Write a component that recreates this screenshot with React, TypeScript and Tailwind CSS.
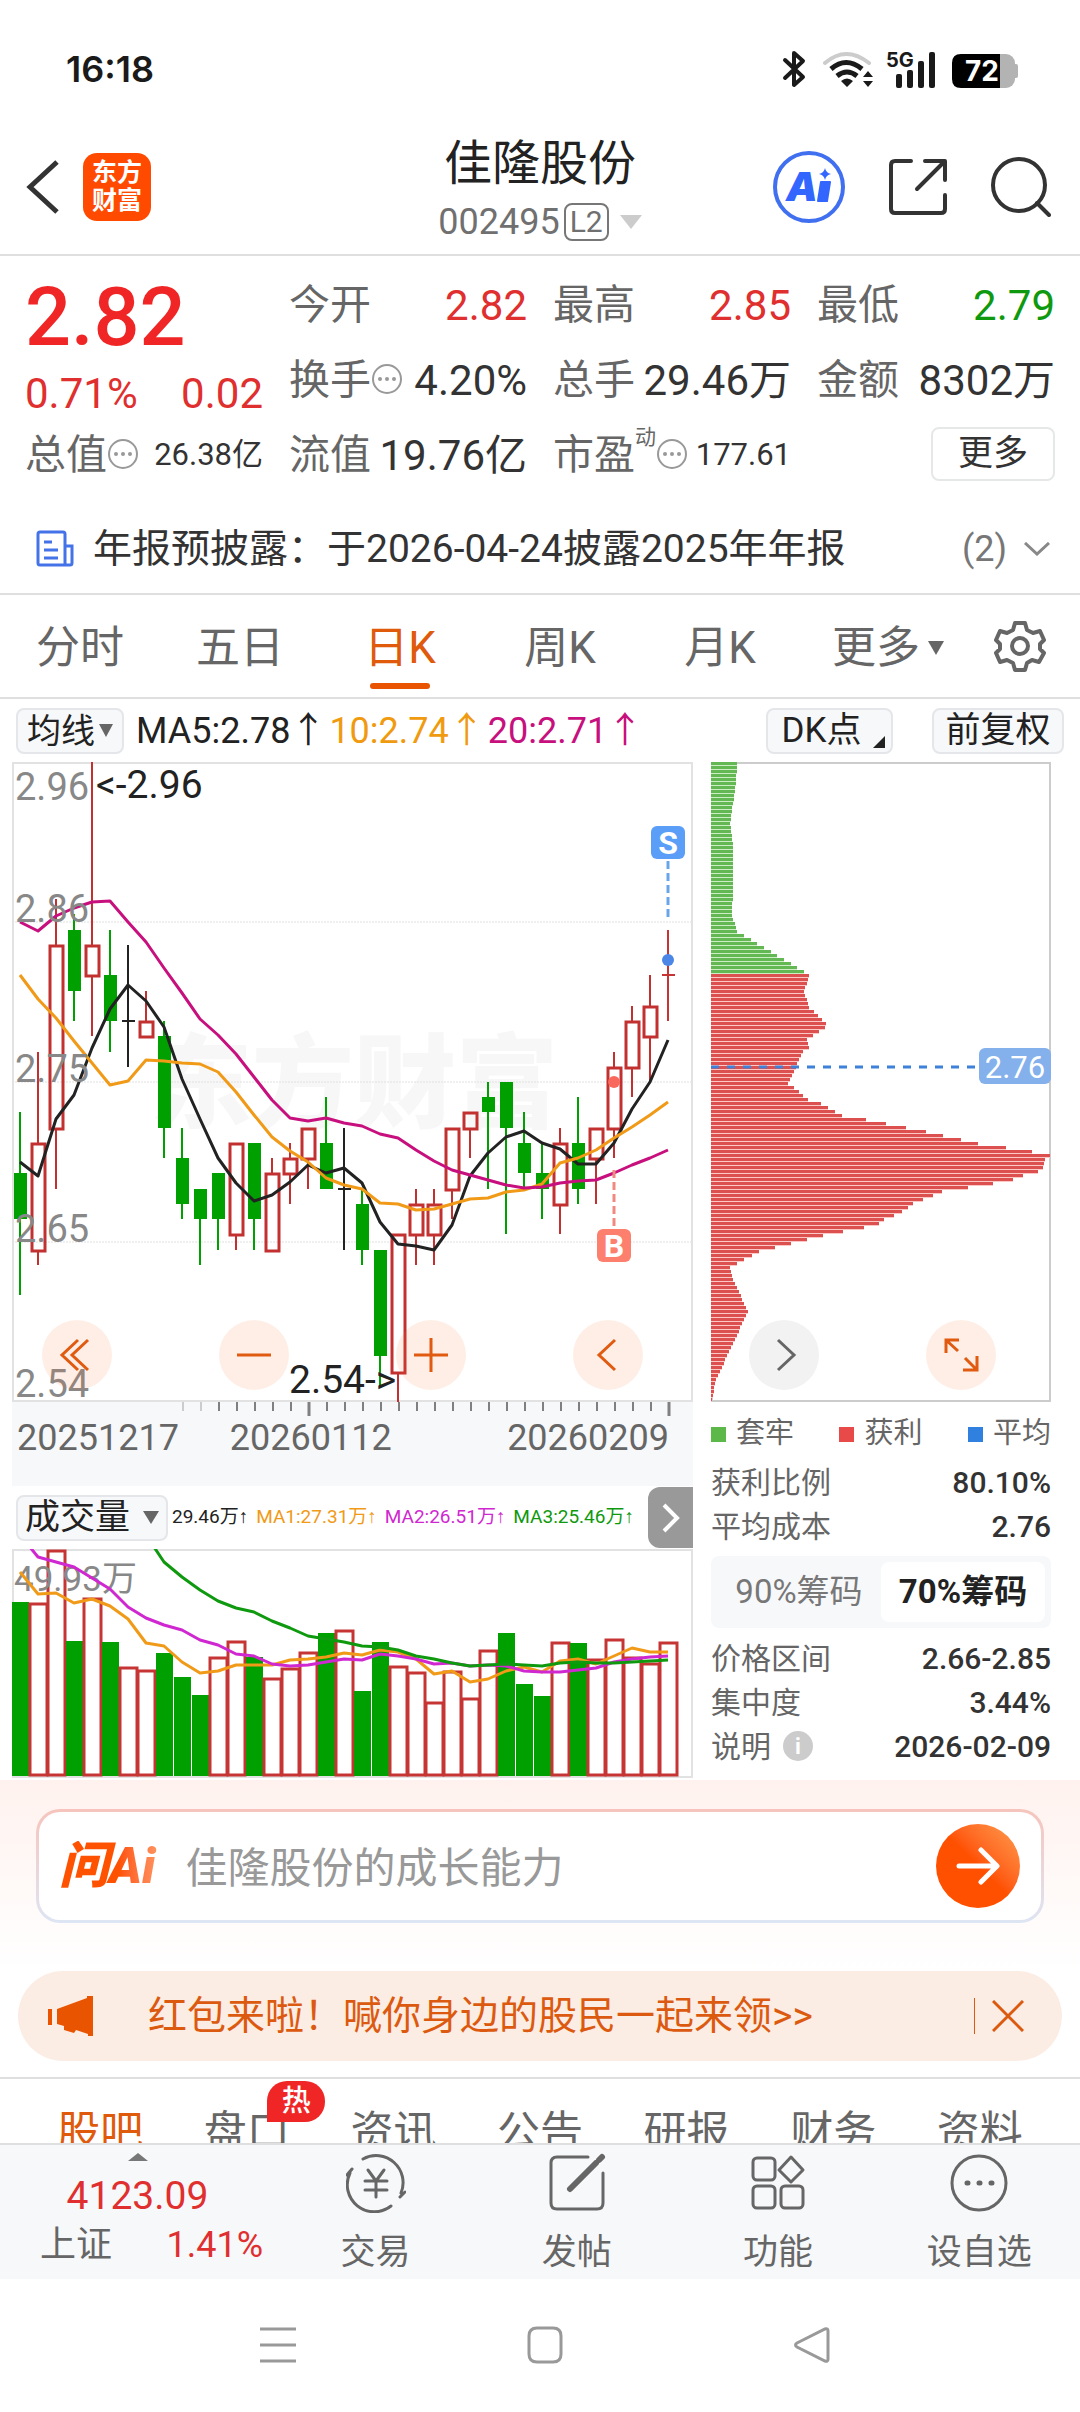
import React, { useState } from 'react';

type Candle = [open: number, close: number, high: number, low: number];

// prices in cents
const CANDLES: Candle[] = [
  [269, 266, 273, 261], [264, 271, 277, 263], [272, 284, 287, 268], [285, 281, 286, 279],
  [282, 284, 296, 278], [282, 279, 285, 277], [279, 279, 284, 276], [278, 279, 281, 278],
  [278, 272, 279, 270], [270, 267, 272, 266], [268, 266, 268, 263], [269, 266, 269, 264],
  [265, 271, 271, 264], [271, 266, 271, 264], [264, 269, 270, 264], [269, 270, 271, 267],
  [270, 272, 272, 268], [271, 268, 274, 268], [268, 268, 272, 264], [267, 264, 268, 263],
  [264, 257, 264, 255], [256, 265, 265, 254], [265, 267, 268, 263], [265, 267, 268, 263],
  [268, 272, 272, 266], [272, 273, 273, 270], [274, 273, 275, 268], [275, 272, 275, 265],
  [271, 269, 273, 268], [269, 268, 271, 266], [267, 271, 272, 265], [271, 268, 274, 267],
  [270, 272, 272, 267], [272, 276, 277, 270], [276, 279, 280, 274], [278, 280, 282, 275],
  [282, 282, 285, 279],
];

const MA5 = [400, 414, 357, 333, 286, 247, 223, 239, 265, 317, 357, 396, 421, 439, 433, 420, 403, 411, 406, 421, 460, 482, 484, 488, 463, 414, 391, 375, 369, 381, 387, 402, 402, 381, 347, 320, 278];
const MA10 = [213, 237, 256, 279, 301, 323, 319, 298, 299, 301, 302, 310, 330, 353, 375, 389, 400, 416, 423, 427, 441, 442, 448, 447, 442, 437, 436, 430, 428, 422, 401, 396, 388, 376, 365, 353, 340];
const MA20 = [160, 169, 154, 146, 140, 139, 160, 180, 206, 231, 257, 273, 292, 315, 338, 356, 359, 356, 361, 364, 372, 376, 388, 399, 408, 413, 418, 423, 426, 425, 421, 419, 418, 411, 403, 396, 388];

// top edge of each volume bar, g = falling day, r = rising day
const VOLUME: [string, number][] = [
  ['g', 53], ['r', 54], ['r', 1], ['g', 92], ['r', 49], ['g', 93], ['r', 118], ['r', 121], ['g', 104], ['g', 128],
  ['g', 146], ['r', 108], ['r', 92], ['g', 108], ['r', 129], ['r', 119], ['r', 103], ['g', 84], ['r', 81], ['g', 142],
  ['g', 93], ['r', 117], ['r', 123], ['r', 153], ['r', 122], ['r', 149], ['r', 101], ['g', 84], ['g', 135], ['g', 147],
  ['r', 93], ['g', 94], ['r', 110], ['r', 90], ['r', 108], ['r', 114], ['r', 93],
];
const VMA1 = [23, 45, 44, 54, 50, 57, 70, 94, 97, 113, 124, 122, 116, 116, 116, 111, 110, 108, 104, 106, 101, 103, 110, 125, 122, 133, 130, 122, 118, 123, 112, 110, 115, 107, 99, 103, 103];
const VMA2 = [-14, 8, 13, 18, 29, 40, 58, 69, 76, 81, 91, 96, 105, 107, 115, 117, 116, 113, 110, 111, 105, 107, 110, 115, 114, 117, 116, 117, 122, 123, 123, 121, 119, 113, 110, 108, 107];
const VMA3 = [-14, 13, 28, 41, 52, 59, 63, 72, 79, 87, 90, 93, 97, 98, 101, 107, 110, 114, 117, 116, 115, 116, 117, 114, 113, 114, 114, 113, 112, 111];

// [row, width] key points of the cost distribution, rows between them are interpolated
const CHIP_KEYS = [
  [0, 26], [5, 25], [10, 22], [15, 19], [21, 22], [31, 22], [38, 21], [42, 26], [43, 33], [52, 93], [53, 98], [57, 93],
  [61, 98], [62, 103], [65, 115], [66, 114], [67, 108], [68, 102], [69, 96], [71, 98], [72, 92], [80, 77], [81, 83],
  [84, 97], [85, 110], [88, 131], [89, 155], [92, 215], [95, 267], [96, 295], [97, 321], [98, 339], [99, 334], [101, 332],
  [102, 327], [103, 312], [104, 302], [105, 282], [106, 257], [107, 231], [109, 212], [110, 202], [112, 191], [113, 183],
  [114, 173], [115, 168], [116, 153], [117, 132], [118, 112], [119, 96], [120, 80], [121, 64], [122, 48], [125, 26],
  [126, 19], [129, 22], [137, 37], [138, 35], [154, 5], [159, 1],
];

const cx = (i: number) => 8 + i * 18;
const py = (cents: number) => Math.round(((296 - cents) * 640) / 42);
const line = (ys: number[], from = 0) => ys.map((y, i) => `${cx(i + from)},${y}`).join(' ');

const chipWidth = (row: number) => {
  const n = CHIP_KEYS.findIndex(([k]) => k >= row);
  const [k1, w1] = CHIP_KEYS[n];
  if (n === 0 || k1 === row) return w1;
  const [k0, w0] = CHIP_KEYS[n - 1];
  return w0 + ((w1 - w0) * (row - k0)) / (k1 - k0);
};

const StatusBar = () => (
  <div className="flex h-[120px] items-center justify-between pt-[18px] pr-[62px] pl-[66px]">
    <span className="font-[Inter] text-[36px] font-semibold text-[#1a1a1a]">16:18</span>
    <svg viewBox="0 0 236 40" className="h-10 w-[236px]">
      <g fill="none" stroke="#1a1a1a" strokeWidth="4" strokeLinecap="round" strokeLinejoin="round">
        <path d="M3 11 L21 28 L12 36 V4 L21 12 L3 29" />
        <path d="M43 14 Q64 -4 87 14" stroke="#ccc" />
        <path d="M49 20 Q64 7 80 20" strokeWidth="5" strokeLinecap="butt" />
        <path d="M55 27 Q65 19 75 27" strokeWidth="5" strokeLinecap="butt" />
      </g>
      <path d="M59 32 Q65 27 71 32 L65 38 Z M81 28 L86 22 L91 28 Z M81 32 H91 L86 38 Z" fill="#1a1a1a" />
      <text x="104" y="18" fontSize="20" className="fill-[#1a1a1a] font-[Inter] font-bold">5G</text>
      <g fill="#1a1a1a">
        <rect x="114" y="25" width="6" height="14" rx="2" />
        <rect x="125" y="21" width="6" height="18" rx="2" />
        <rect x="136" y="12" width="6" height="27" rx="2" />
        <rect x="147" y="3" width="6" height="36" rx="2" />
      </g>
      <rect x="185" y="5" width="48" height="34" rx="9" fill="#b3b3b3" />
      <rect x="230" y="15" width="6" height="14" rx="2" fill="#b3b3b3" />
      <path d="M218 5 V39 H179 Q170 39 170 30 V14 Q170 5 179 5 Z" fill="#000" />
      <text x="183" y="32" fontSize="28" className="fill-white font-[Inter] font-bold">72</text>
    </svg>
  </div>
);

const Header = () => (
  <header className="grid h-[136px] grid-cols-[1fr_auto_1fr] items-center border-b-2 border-[#dfdfdf]">
    <div className="flex items-center gap-[23px] pl-[26px]">
      <button aria-label="返回">
        <svg viewBox="0 0 34 56" className="h-14 w-[34px]">
          <path d="M31 3 L4 28 L31 53" fill="none" stroke="#333" strokeWidth="5" />
        </svg>
      </button>
      <div className="flex h-[68px] w-[68px] flex-col items-center justify-center rounded-[14px] bg-[#ff4a00] text-[25px] leading-[28px] font-bold text-white">
        <span>东方</span>
        <span>财富</span>
      </div>
    </div>
    <div className="flex flex-col items-center pt-2.5">
      <h1 className="text-[48px] leading-[60px] text-[#222]">佳隆股份</h1>
      <div className="flex h-14 items-center text-[36px] text-[#707070]">
        <span>002495</span>
        <span className="ml-1 rounded-lg border-2 border-[#777] px-1 text-[30px] leading-[34px]">L2</span>
        <svg viewBox="0 0 22 14" className="ml-[11px] h-3.5 w-[22px]"><path d="M0 0 H22 L11 14 Z" fill="#ccc" /></svg>
      </div>
    </div>
    <div className="flex items-center justify-end gap-[43px] pr-[29px]">
      <button aria-label="AI">
        <svg viewBox="0 0 72 72" className="h-[72px] w-[72px]">
          <circle cx="36" cy="36" r="34" fill="none" stroke="#4070f0" strokeWidth="4" />
          <text x="13" y="50" fontSize="40" className="fill-[#3366ff] font-[Inter] font-black italic">A</text>
          <path d="M48 31 H57 L54 50 H45 Z" fill="#3366ff" stroke="#3366ff" strokeWidth="2" strokeLinejoin="round" />
          <path d="M52 17 Q53 22 58 23 Q53 24 52 29 Q51 24 46 23 Q51 22 52 17 Z" fill="#3366ff" />
        </svg>
      </button>
      <button aria-label="分享">
        <svg viewBox="0 0 60 60" className="h-[60px] w-[60px]">
          <path d="M23 4 H7 Q3 4 3 8 V52 Q3 56 7 56 H53 Q57 56 57 52 V38 M37 4 H57 V23 M56 5 L29 32" fill="none" stroke="#333" strokeWidth="4" strokeLinecap="round" strokeLinejoin="round" />
        </svg>
      </button>
      <button aria-label="搜索">
        <svg viewBox="0 0 60 60" className="h-[60px] w-[60px]">
          <circle cx="28" cy="28" r="26" fill="none" stroke="#333" strokeWidth="4" />
          <path d="M46 46 L58 58" stroke="#333" strokeWidth="4" strokeLinecap="round" />
        </svg>
      </button>
    </div>
  </header>
);

const MoreDots = () => (
  <svg viewBox="0 0 32 32" className="mb-1 h-8 w-8 shrink-0">
    <circle cx="16" cy="16" r="14" fill="none" stroke="#999" strokeWidth="2" />
    <g fill="#999"><circle cx="9" cy="16" r="2" /><circle cx="16" cy="16" r="2" /><circle cx="23" cy="16" r="2" /></g>
  </svg>
);

interface QuoteCellProps {
  label: string;
  value: string;
  tone?: 'up' | 'down' | 'plain';
  small?: boolean;
  dots?: boolean;
  sup?: string;
}

const TONES = { up: 'text-[#e02f2f]', down: 'text-[#0f990f]', plain: 'text-[#333]' };

const QuoteCell: React.FC<QuoteCellProps> = ({ label, value, tone = 'plain', small, dots, sup }) => (
  <div className="flex h-[75px] items-center whitespace-nowrap">
    <span className="text-[41px] text-[#666]">{label}</span>
    {sup && <span className="-mt-9 text-[21px] text-[#666]">{sup}</span>}
    {dots && <MoreDots />}
    <span className={`ml-auto ${small ? 'text-[31px]' : 'text-[42px]'} ${TONES[tone]}`}>{value}</span>
  </div>
);

const Quotes = () => (
  <section className="grid grid-cols-4 gap-x-[26px] px-[25px] pt-3">
    <div className="row-span-2">
      <div className="flex h-[100px] items-center text-[81px] font-medium text-[#f02626]">2.82</div>
      <div className="flex h-[50px] items-center justify-between text-[42px] text-[#e02f2f]">
        <span>0.71%</span>
        <span>0.02</span>
      </div>
    </div>
    <QuoteCell label="今开" value="2.82" tone="up" />
    <QuoteCell label="最高" value="2.85" tone="up" />
    <QuoteCell label="最低" value="2.79" tone="down" />
    <QuoteCell label="换手" value="4.20%" dots />
    <QuoteCell label="总手" value="29.46万" />
    <QuoteCell label="金额" value="8302万" />
    <QuoteCell label="总值" value="26.38亿" small dots />
    <QuoteCell label="流值" value="19.76亿" />
    <QuoteCell label="市盈" value="177.61" small dots sup="动" />
    <div className="flex h-[75px] items-center justify-end">
      <button className="mb-1 h-[54px] w-[124px] rounded-lg border-2 border-[#e6e8e8] text-[35px] leading-none text-[#333]">更多</button>
    </div>
  </section>
);

const News = () => (
  <a href="#news" className="flex h-[102px] items-center border-b-2 border-[#dfdfdf] pt-3 pr-[30px] pl-9 text-[39px] text-[#333]">
    <svg viewBox="0 0 38 38" className="h-[38px] w-[38px]">
      <path d="M29 35 H4 Q2 35 2 33 V4 Q2 2 4 2 H27 Q29 2 29 4 V35 H34 Q36 35 36 33 V16 H29 M8 12 H16 M8 20 H22 M8 28 H22" fill="none" stroke="#4472e8" strokeWidth="3" />
    </svg>
    <span className="ml-[19px] whitespace-nowrap">年报预披露：于2026-04-24披露2025年年报</span>
    <span className="ml-auto text-[36px] text-[#777]">(2)</span>
    <svg viewBox="0 0 26 14" className="ml-[17px] h-3.5 w-[26px]"><path d="M1 1 L13 12 L25 1" fill="none" stroke="#888" strokeWidth="3" /></svg>
  </a>
);

const PERIODS = ['分时', '五日', '日K', '周K', '月K', '更多'];

const PeriodTabs = () => {
  const [active, setActive] = useState('日K');
  return (
    <nav className="flex h-[104px] items-center border-b-2 border-[#dfdfdf]">
      {PERIODS.map((name) => (
        <button
          key={name}
          onClick={() => setActive(name)}
          className={`relative flex h-full flex-1 items-center justify-center pt-1 text-[44px] ${active === name ? 'text-[#e05a0c]' : 'text-[#666]'}`}
        >
          {name === '更多' ? (
            <span className="flex items-center gap-2 pl-4">
              {name}
              <svg viewBox="0 0 16 14" className="h-3.5 w-4"><path d="M0 0 H16 L8 14 Z" fill="#666" /></svg>
            </span>
          ) : (
            name
          )}
          {active === name && <span className="absolute bottom-2 h-1.5 w-[60px] rounded-full bg-[#e85400]" />}
        </button>
      ))}
      <button aria-label="设置" className="flex w-[120px] justify-center">
        <svg viewBox="0 0 52 52" className="h-[52px] w-[52px]">
          <path d="M21 3 H31 L33 10 L39 13 L46 11 L50 20 L46 24 V29 L50 33 L45 42 L38 40 L33 43 L31 50 H21 L19 43 L13 40 L6 42 L2 33 L6 29 V24 L2 20 L6 11 L13 13 L19 10 Z" fill="none" stroke="#666" strokeWidth="4" strokeLinejoin="round" />
          <circle cx="26" cy="26" r="8" fill="none" stroke="#666" strokeWidth="4" />
        </svg>
      </button>
    </nav>
  );
};

const MaBar = () => (
  <div className="flex h-[63px] items-center pr-4 pl-4 text-[36px] whitespace-nowrap">
    <label className="flex h-[46px] w-[108px] items-center justify-center gap-1 rounded-lg border-2 border-[#e4e6ea] bg-[#f7f8fa]">
      <select aria-label="指标" className="appearance-none bg-transparent text-[34px] leading-[42px] text-[#222] outline-none">
        <option>均线</option>
      </select>
      <svg viewBox="0 0 14 13" className="h-[13px] w-3.5"><path d="M0 0 H14 L7 13 Z" fill="#666" /></svg>
    </label>
    <span className="ml-3 text-[#222]">MA5:2.78↑</span>
    <span className="ml-[3px] text-[#f09a10]">10:2.74↑</span>
    <span className="ml-[3px] text-[#c7107e]">20:2.71↑</span>
    <button className="relative ml-auto h-[46px] w-[127px] rounded-lg border-2 border-[#e4e6ea] bg-[#f7f8fa] pr-4 text-[35px] leading-none text-[#222]">
      DK点
      <svg viewBox="0 0 12 12" className="absolute right-1.5 bottom-1 h-3 w-3"><path d="M12 0 V12 H0 Z" fill="#222" /></svg>
    </button>
    <button className="ml-[39px] h-[46px] w-[132px] rounded-lg border-2 border-[#e4e6ea] bg-[#f7f8fa] text-[35px] leading-none text-[#222]">前复权</button>
  </div>
);

const CandleShape = ({ candle, i }: { candle: Candle; i: number }) => {
  const [open, close, high, low] = candle;
  const x = cx(i);
  if (open === close) {
    const color = i === CANDLES.length - 1 ? '#c63434' : '#222';
    return <path d={`M${x} ${py(high)} V${py(low)} M${x - 6} ${py(close)} H${x + 7}`} stroke={color} strokeWidth="2" />;
  }
  const top = py(Math.max(open, close));
  const bottom = py(Math.min(open, close));
  if (close < open) {
    return (
      <g fill="#00a000">
        <rect x={x - 1} y={py(high)} width="2" height={py(low) - py(high)} />
        <rect x={x - 6} y={top} width="13" height={bottom - top} />
      </g>
    );
  }
  return (
    <g fill="none" stroke="#c23030">
      <path d={`M${x} ${py(high)} V${top} M${x} ${bottom} V${py(low)}`} strokeWidth="2" />
      <rect x={x - 6} y={top + 1} width="13" height={bottom - top} strokeWidth="3" />
    </g>
  );
};

const RoundButton = ({ label, d, gray }: { label: string; d: string; gray?: boolean }) => (
  <button aria-label={label} className={`h-[70px] w-[70px] rounded-full ${gray ? 'bg-[#f2f2f2]' : 'bg-[#f97030]/12'}`}>
    <svg viewBox="0 0 70 70" className="h-full w-full">
      <path d={d} fill="none" stroke={gray ? '#666' : '#e05a10'} strokeWidth="3" />
    </svg>
  </button>
);

const KLineChart = () => (
  <div className="relative">
    <svg viewBox="0 0 681 640" className="block w-full">
      <rect x="1" y="1" width="679" height="638" fill="#fff" stroke="#e2e2e2" strokeWidth="2" />
      <text x="138" y="358" fontSize="102" className="fill-[#f7f7f7] font-black">东方财富</text>
      <path d="M0 160 H681 M0 320 H681 M0 480 H681" stroke="#e0e0e0" strokeWidth="1" strokeDasharray="2 1" />
      {CANDLES.map((c, i) => <CandleShape key={i} candle={c} i={i} />)}
      <g fill="none" strokeWidth="3" strokeLinejoin="round">
        <polyline points={line(MA5)} stroke="#222" />
        <polyline points={line(MA10)} stroke="#f09a18" />
        <polyline points={line(MA20)} stroke="#c7107e" />
      </g>
      <g fontSize="38" className="fill-[#888]">
        <text x="3" y="38">2.96</text>
        <text x="3" y="160">2.86</text>
        <text x="3" y="320">2.75</text>
        <text x="3" y="480">2.65</text>
        <text x="3" y="635">2.54</text>
      </g>
      <g fontSize="39" className="fill-[#222]">
        <text x="84" y="36">&lt;-2.96</text>
        <text x="277" y="631">2.54-&gt;</text>
      </g>
      <rect x="639" y="64" width="34" height="33" rx="6" fill="#5b9ef8" />
      <text x="656" y="92" fontSize="32" textAnchor="middle" className="fill-white font-bold">S</text>
      <path d="M656 99 V158" stroke="#6aa5e8" strokeWidth="3" strokeDasharray="8 4" />
      <circle cx="656" cy="198" r="6" fill="#4c86e6" />
      <rect x="585" y="467" width="34" height="33" rx="6" fill="#fd7f6d" />
      <text x="602" y="495" fontSize="32" textAnchor="middle" className="fill-white font-bold">B</text>
      <path d="M602 408 V464" stroke="#f08a80" strokeWidth="3" strokeDasharray="8 4" />
      <circle cx="602" cy="320" r="6" fill="#f9685c" />
    </svg>
    <div className="absolute bottom-3 left-[30px] flex gap-[107px]">
      <RoundButton label="最左" d="M36 20 L20 35 L36 50 M46 20 L30 35 L46 50" />
      <RoundButton label="缩小" d="M18 35 H52" />
      <RoundButton label="放大" d="M18 35 H52 M35 18 V52" />
      <RoundButton label="左移" d="M42 20 L26 35 L42 50" />
    </div>
  </div>
);

const DateAxis = () => (
  <div className="h-[84px] bg-[#f7f8fa]">
    <svg viewBox="0 0 681 14" className="block w-full">
      {CANDLES.map((_, i) => {
        if (i < 9) return null;
        const major = i === 16 || i === 36;
        return <path key={i} d={`M${cx(i) + 1} 0 V${major ? 14 : 9}`} stroke={i < 11 ? '#ccc' : '#808080'} strokeWidth={major ? 3 : 2} />;
      })}
    </svg>
    <div className="flex pr-6 pl-[5px] text-[36px] leading-[44px] text-[#666]">
      <span>20251217</span>
      <span className="ml-[51px]">20260112</span>
      <span className="ml-auto">20260209</span>
    </div>
  </div>
);

const VolumeBar = () => (
  <div className="flex h-[63px] items-center pl-1 whitespace-nowrap">
    <label className="flex h-[46px] w-[152px] shrink-0 items-center justify-center gap-3 rounded-lg border-2 border-[#e4e6ea] bg-[#f7f8fa]">
      <select aria-label="副图指标" className="appearance-none bg-transparent text-[35px] leading-[42px] text-[#222] outline-none">
        <option>成交量</option>
      </select>
      <svg viewBox="0 0 16 13" className="h-[13px] w-4"><path d="M0 0 H16 L8 13 Z" fill="#666" /></svg>
    </label>
    <div className="ml-1 flex flex-1 justify-between pr-3.5 font-[Roboto,'Liberation_Sans','Noto_Sans_CJK_SC',sans-serif] text-[19px]">
      <span className="text-[#222]">29.46万↑</span>
      <span className="text-[#f09a18]">MA1:27.31万↑</span>
      <span className="text-[#d028d0]">MA2:26.51万↑</span>
      <span className="text-[#0f990f]">MA3:25.46万↑</span>
    </div>
    <button aria-label="更多指标" className="flex h-[61px] w-[45px] shrink-0 items-center justify-center rounded-l-xl bg-[#999]">
      <svg viewBox="0 0 18 30" className="h-[30px] w-[18px]"><path d="M2 2 L15 15 L2 28" fill="none" stroke="#fff" strokeWidth="4" /></svg>
    </button>
  </div>
);

const VolumeChart = () => (
  <svg viewBox="0 0 681 229" className="block w-full">
    <rect x="1" y="1" width="679" height="227" fill="#fff" stroke="#e2e2e2" strokeWidth="2" />
    {VOLUME.map(([kind, y], i) =>
      kind === 'g' ? (
        <rect key={i} x={cx(i) - 8} y={y} width="17" height={227 - y} fill="#00a000" />
      ) : (
        <rect key={i} x={cx(i) - 8} y={y + 1} width="17" height={225 - y} fill="#fff" stroke="#c63434" strokeWidth="3" />
      )
    )}
    <text x="2" y="42" fontSize="35" className="fill-[#888]">49.93万</text>
    <g fill="none" strokeWidth="3" strokeLinejoin="round">
      <polyline points={line(VMA1)} stroke="#f09a18" />
      <polyline points={line(VMA2)} stroke="#d028d0" />
      <polyline points={line(VMA3, 7)} stroke="#0f990f" />
    </g>
  </svg>
);

const ChipChart = () => (
  <div className="relative">
    <svg viewBox="0 0 340 640" className="block w-full">
      <rect x="1" y="1" width="338" height="638" fill="#fff" stroke="#ccc" strokeWidth="2" />
      {Array.from({ length: 160 }, (_, row) => {
        const w = Math.round(chipWidth(row));
        const up = row >= 53;
        return (
          <g key={row}>
            <rect x="0" y={row * 4} width={w} height="4" fill={up ? '#fcc8c6' : '#cdeec4'} />
            <rect x="0" y={row * 4} width={w} height="3" fill={up ? '#dc5050' : '#64b854'} />
          </g>
        );
      })}
      <path d="M0 305 H268" stroke="#3d82d8" strokeWidth="3" strokeDasharray="8 8" />
      <rect x="268" y="286" width="72" height="36" rx="6" fill="#84b0ec" />
      <text x="304" y="316" fontSize="31" textAnchor="middle" className="fill-white">2.76</text>
    </svg>
    <div className="absolute bottom-3 left-[38px] flex gap-[107px]">
      <RoundButton label="右移" d="M29 20 L45 35 L29 50" gray />
      <RoundButton label="全屏" d="M33 20 H20 V33 M20 20 L32 31 M51 36 V50 H37 M51 50 L39 38" />
    </div>
  </div>
);

const StatRow = ({ label, value, info }: { label: string; value: string; info?: boolean }) => (
  <div className="flex h-11 items-center text-[30px]">
    <span className="text-[#666]">{label}</span>
    {info && <span className="ml-3 flex h-[30px] w-[30px] items-center justify-center rounded-full bg-[#ccc] text-[22px] font-bold text-white">i</span>}
    <span className="ml-auto font-medium text-[#333]">{value}</span>
  </div>
);

const LEGEND = [
  { name: '套牢', color: 'bg-[#5cb848]' },
  { name: '获利', color: 'bg-[#e84a4a]' },
  { name: '平均', color: 'bg-[#3080e0]' },
];

const ChipPanel = () => {
  const [range, setRange] = useState(70);
  return (
    <div>
      <div className="flex h-[58px] items-center justify-between pt-1.5 text-[29px] text-[#666]">
        {LEGEND.map((item) => (
          <span key={item.name} className="flex items-center gap-2.5">
            <span className={`h-[15px] w-[15px] ${item.color}`} />
            {item.name}
          </span>
        ))}
      </div>
      <StatRow label="获利比例" value="80.10%" />
      <StatRow label="平均成本" value="2.76" />
      <div className="my-2 flex h-[72px] rounded-lg bg-[#f7f8fa] p-1.5 text-[33px]">
        {[90, 70].map((n) => (
          <button
            key={n}
            onClick={() => setRange(n)}
            className={`flex-1 rounded-lg ${range === n ? 'bg-white font-bold text-[#222]' : 'text-[#777]'}`}
          >
            {n}%筹码
          </button>
        ))}
      </div>
      <StatRow label="价格区间" value="2.66-2.85" />
      <StatRow label="集中度" value="3.44%" />
      <StatRow label="说明" value="2026-02-09" info />
    </div>
  );
};

const AskAi = () => (
  <section className="bg-linear-to-b from-[#fff2ee] to-white px-9 pt-[29px] pb-12">
    <div className="rounded-[24px] bg-linear-to-b from-[#f6c4bc] to-[#dde5f4] p-[3px]">
      <form className="flex h-[108px] items-center rounded-[21px] bg-white pr-[21px] pl-5" onSubmit={(e) => e.preventDefault()}>
        <span className="bg-linear-to-r from-[#ff5200] from-60% to-[#ff9460] bg-clip-text pr-1 text-[50px] leading-none font-black text-transparent italic">问Ai</span>
        <input
          aria-label="问AI"
          placeholder="佳隆股份的成长能力"
          className="ml-[26px] min-w-0 flex-1 pt-1 text-[42px] outline-none placeholder:text-[#999]"
        />
        <button aria-label="提问" className="flex h-[84px] w-[84px] items-center justify-center rounded-full bg-linear-to-tr from-[#ff5000] from-50% to-[#ff9c4c]">
          <svg viewBox="0 0 44 40" className="h-10 w-11"><path d="M3 20 H40 M25 4 L41 20 L25 36" fill="none" stroke="#fff" strokeWidth="5" strokeLinecap="round" strokeLinejoin="round" /></svg>
        </button>
      </form>
    </div>
  </section>
);

const Banner = () => (
  <div className="mx-[18px] mb-4 flex h-[90px] items-center rounded-full bg-[#fcede4] pr-[38px] pl-[30px]">
    <svg viewBox="0 0 46 40" className="h-10 w-[46px]">
      <path d="M0 13 H4 V29 H0 Z M9 13 L39 2 V0 H45 V40 H40 V38 L28 34 L26 37 L16 34 V30 L9 28 Z" fill="#e85400" />
    </svg>
    <a href="#invite" className="ml-[54px] text-[39px] whitespace-nowrap text-[#dc5a10]">红包来啦！喊你身边的股民一起来领&gt;&gt;</a>
    <span className="ml-auto h-9 w-px bg-[#dc5a10]" />
    <button aria-label="关闭" className="ml-[17px]">
      <svg viewBox="0 0 32 32" className="h-8 w-8"><path d="M1 1 L31 31 M31 1 L1 31" stroke="#dc5a10" strokeWidth="3" /></svg>
    </button>
  </div>
);

const SECTIONS = ['股吧', '盘口', '资讯', '公告', '研报', '财务', '资料'];

const SectionTabs = () => (
  <nav className="flex h-[66px] items-start overflow-hidden border-t-2 border-[#dfdfdf] px-[27px]">
    {SECTIONS.map((name, i) => (
      <button key={name} className={`relative flex-1 pt-8 text-[43px] leading-[43px] ${i === 0 ? 'text-[#e05a0c]' : 'text-[#666]'}`}>
        {name}
        {i === 1 && (
          <span className="absolute top-0.5 right-[-5px] flex h-[41px] w-[58px] items-center justify-center rounded-[20px] rounded-bl-none bg-[#f02626] text-[29px] leading-none font-medium text-white">
            热
          </span>
        )}
      </button>
    ))}
  </nav>
);

const NAV_ITEMS = [
  {
    name: '交易',
    icon: (
      <>
        <path d="M17 6 A27 27 0 0 1 55 40 M59 39 L54 44 M45 53 A27 27 0 0 1 4 20 M1 22 L6 16" />
        <path d="M22 17 L30 28 L38 17 M19 28 H41 M19 37 H41 M30 28 V44" />
      </>
    ),
  },
  {
    name: '发帖',
    icon: (
      <>
        <path d="M41 4 H10 Q4 4 4 10 V50 Q4 56 10 56 H50 Q56 56 56 50 V20" />
        <path d="M55 4 L52 7 M49 10 L23 36" strokeWidth="6" />
      </>
    ),
  },
  {
    name: '功能',
    icon: (
      <>
        <rect x="5" y="5" width="22" height="22" rx="4" />
        <rect x="5" y="33" width="22" height="22" rx="4" />
        <rect x="33" y="33" width="22" height="22" rx="4" />
        <path d="M43 4 L55 17 L43 29 L31 17 Z" />
      </>
    ),
  },
  {
    name: '设自选',
    icon: (
      <>
        <circle cx="30" cy="30" r="27" />
        <path d="M18 30 h1 M30 30 h1 M42 30 h1" strokeWidth="5" />
      </>
    ),
  },
];

const BottomNav = () => (
  <nav className="flex h-[136px] border-t-2 border-[#dfdfdf] bg-[#f7f8fa]">
    <a href="#index" className="flex w-[275px] flex-col items-center pt-2">
      <svg viewBox="0 0 20 8" className="h-2 w-5"><path d="M0 8 L10 0 L20 8 Z" fill="#777" /></svg>
      <span className="mt-3 text-[39px] leading-[46px] text-[#e02f2f]">4123.09</span>
      <span className="flex w-[275px] justify-between pr-3 pl-10 text-[36px] leading-[52px]">
        <span className="text-[#666]">上证</span>
        <span className="text-[#e02f2f]">1.41%</span>
      </span>
    </a>
    {NAV_ITEMS.map((item) => (
      <button key={item.name} className="flex flex-1 flex-col items-center pt-2 text-[35px] leading-[48px] text-[#666]">
        <svg viewBox="0 0 60 60" className="h-[60px] w-[60px]" fill="none" stroke="#666" strokeWidth="3" strokeLinecap="round" strokeLinejoin="round">
          {item.icon}
        </svg>
        <span className="mt-4">{item.name}</span>
      </button>
    ))}
  </nav>
);

const SystemNav = () => (
  <div className="flex h-[131px] items-center pr-[135px] pl-36">
    {[
      ['菜单', 'M0 3 H36 M0 19 H36 M0 35 H36'],
      ['主页', 'M10 2 H26 Q34 2 34 10 V28 Q34 36 26 36 H10 Q2 36 2 28 V10 Q2 2 10 2 Z'],
      ['后退', 'M3 17 L31 3 Q34 2 34 5 V33 Q34 36 31 35 L3 21 Q0 19 3 17 Z'],
    ].map(([name, d]) => (
      <button key={name} aria-label={name} className="flex flex-1 justify-center">
        <svg viewBox="0 0 36 38" className="h-[38px] w-9"><path d={d} fill="none" stroke="#999" strokeWidth="3" /></svg>
      </button>
    ))}
  </div>
);

const App = () => (
  <div className="w-full bg-white font-[Roboto,'Noto_Sans_CJK_SC',sans-serif]">
    <StatusBar />
    <Header />
    <Quotes />
    <News />
    <PeriodTabs />
    <MaBar />
    <section className="grid grid-cols-[681fr_340fr] gap-x-[18px] pr-[29px] pb-0.5 pl-3">
      <KLineChart />
      <ChipChart />
      <div>
        <DateAxis />
        <VolumeBar />
        <VolumeChart />
      </div>
      <ChipPanel />
    </section>
    <AskAi />
    <Banner />
    <SectionTabs />
    <BottomNav />
    <SystemNav />
  </div>
);

export default App;
